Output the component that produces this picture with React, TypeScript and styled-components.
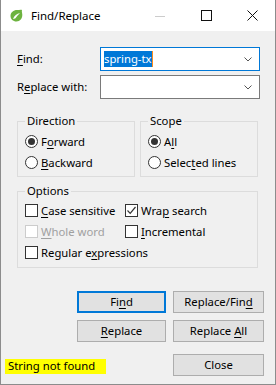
import React from 'react';
import styled, { createGlobalStyle, css } from 'styled-components';

const GlobalStyle = createGlobalStyle`
  html, body {
    margin: 0;
    padding: 0;
    background: #ffffff;
  }
  * {
    box-sizing: border-box;
  }
`;

const Window = styled.div`
  width: 276px;
  height: 385px;
  display: flex;
  flex-direction: column;
  background: #f0f0f0;
  border: 1px solid #8c8c8c;
  border-top: none;
  font-family: "Noto Sans", "Open Sans", sans-serif;
  font-size: 11.3px;
  color: #000;
  overflow: hidden;
`;

const TitleBar = styled.div`
  height: 31px;
  flex: none;
  background: #ffffff;
  display: flex;
  align-items: center;
  padding-left: 9px;
`;

const Title = styled.span`
  margin-left: 8px;
  font-size: 11.5px;
  color: #000;
  flex: 1;
  padding-bottom: 1px;
`;

const CaptionButton = styled.div`
  width: 46px;
  height: 31px;
  display: flex;
  align-items: center;
  justify-content: center;
`;

const Body = styled.div`
  flex: 1;
  display: flex;
  flex-direction: column;
  padding: 16px 11px 0 16px;
`;

const FieldRow = styled.div`
  display: flex;
  align-items: center;
  height: 24px;
  margin-right: 4px;
  & + & {
    margin-top: 4px;
  }
`;

const FieldLabel = styled.span`
  width: 83px;
  padding-bottom: 1px;
`;

const Combo = styled.div<{ focused?: boolean }>`
  flex: 1;
  height: 24px;
  background: #fff;
  border: 1px solid ${p => (p.focused ? '#0078d7' : '#7a7a7a')};
  display: flex;
  align-items: center;
  padding: 0 7px 0 3px;
`;

const Selected = styled.span`
  background: #0078d7;
  color: #fff;
  line-height: 15px;
  border-right: 1px solid #ff8c1a;
  padding-bottom: 1px;
`;

const ComboValue = styled.div`
  flex: 1;
  display: flex;
`;

const Groups = styled.div`
  display: flex;
  gap: 5px;
  margin-top: 14px;
  width: 241px;
`;

const Group = styled.fieldset<{ wide?: boolean }>`
  margin: 0;
  border: 1px solid #dcdcdc;
  padding: 2px 0 3px 7px;
  width: ${p => (p.wide ? '241px' : '118px')};
  display: flex;
  flex-direction: column;
  ${p =>
    p.wide &&
    css`
      margin-top: 6px;
      padding-top: 1px;
      padding-bottom: 4px;
    `}
`;

const Legend = styled.legend`
  padding: 0 2px;
  margin-left: 0;
  line-height: 16px;
`;

const OptionGrid = styled.div`
  display: grid;
  grid-template-columns: 100px 1fr;
  row-gap: 0;
`;

const Choice = styled.div<{ disabled?: boolean; span?: boolean }>`
  display: flex;
  align-items: center;
  height: 21px;
  gap: 3px;
  color: ${p => (p.disabled ? '#a0a0a0' : '#000')};
  white-space: nowrap;
  ${p =>
    p.span &&
    css`
      grid-column: 1 / span 2;
    `}
`;

const Radio = styled.span<{ checked?: boolean }>`
  width: 13px;
  height: 13px;
  border-radius: 50%;
  border: 1px solid #333;
  background: #fff;
  display: flex;
  align-items: center;
  justify-content: center;
  flex: none;
  &::after {
    content: '';
    width: 7px;
    height: 7px;
    border-radius: 50%;
    background: ${p => (p.checked ? '#333' : 'transparent')};
  }
`;

const Box = styled.span<{ disabled?: boolean }>`
  width: 13px;
  height: 13px;
  border: 1px solid ${p => (p.disabled ? '#cccccc' : '#333')};
  background: #fff;
  flex: none;
  display: flex;
  align-items: center;
  justify-content: center;
`;

const U = styled.span`
  text-decoration: underline;
  text-underline-offset: 2px;
`;

const Buttons = styled.div`
  display: grid;
  grid-template-columns: 89px 91px;
  column-gap: 7px;
  row-gap: 7px;
  justify-content: end;
  margin-top: 23px;
`;

const Button = styled.div<{ primary?: boolean }>`
  height: 22px;
  background: #e1e1e1;
  border: ${p => (p.primary ? '2px solid #0078d7' : '1px solid #adadad')};
  display: flex;
  align-items: center;
  justify-content: center;
  padding-bottom: 1px;
`;

const Footer = styled.div`
  display: flex;
  justify-content: space-between;
  align-items: flex-start;
  margin-top: 12px;
  margin-left: -12px;
`;

const Status = styled.span`
  background: #ffff00;
  margin-top: 5px;
  height: 15px;
  width: 101px;
  padding-left: 3px;
  line-height: 14px;
`;

const CloseButton = styled(Button)`
  width: 91px;
`;

const SpringIcon = () => (
  <svg width="13" height="13" viewBox="0 0 13 13">
    <path d="M12 1 C11 0.4 9 1 7 1 C3.5 1 0.5 3.5 0.5 7 C0.5 10 3 12.5 6.5 12.5 C10 12.5 12.5 9.5 12.3 5.5 C12.2 3.5 11.5 2.5 12 1 Z" fill="#6db33f" />
    <path d="M3 10 C4 6.5 7 5 10 4 C8 5.8 6.5 7.5 5.5 9.2 C4.8 9.8 3.8 10 3 10 Z" fill="#ffffff" />
  </svg>
);

const Chevron = () => (
  <svg width="8" height="5" viewBox="0 0 8 5">
    <path d="M0.5 0.5 L4 4 L7.5 0.5" fill="none" stroke="#555" strokeWidth="1" />
  </svg>
);

const Check = () => (
  <svg width="11" height="11" viewBox="0 0 11 11">
    <path d="M1.5 5.5 L4.2 8.3 L9.5 2" fill="none" stroke="#333" strokeWidth="1.2" />
  </svg>
);

export default function App() {
  return (
    <>
      <GlobalStyle />
      <Window>
        <TitleBar>
          <SpringIcon />
          <Title>Find/Replace</Title>
          <CaptionButton>
            <svg width="10" height="10" viewBox="0 0 10 10">
              <line x1="0" y1="5.5" x2="10" y2="5.5" stroke="#cccccc" strokeWidth="1" />
            </svg>
          </CaptionButton>
          <CaptionButton>
            <svg width="11" height="11" viewBox="0 0 11 11">
              <rect x="0.5" y="0.5" width="10" height="10" fill="none" stroke="#111" strokeWidth="1" />
            </svg>
          </CaptionButton>
          <CaptionButton>
            <svg width="11" height="11" viewBox="0 0 11 11">
              <path d="M0.5 0.5 L10.5 10.5 M10.5 0.5 L0.5 10.5" stroke="#111" strokeWidth="1" />
            </svg>
          </CaptionButton>
        </TitleBar>
        <Body>
          <FieldRow>
            <FieldLabel>
              <U>F</U>ind:
            </FieldLabel>
            <Combo focused>
              <ComboValue>
                <Selected>spring-tx</Selected>
              </ComboValue>
              <Chevron />
            </Combo>
          </FieldRow>
          <FieldRow>
            <FieldLabel>
              R<U>e</U>place with:
            </FieldLabel>
            <Combo>
              <ComboValue />
              <Chevron />
            </Combo>
          </FieldRow>

          <Groups>
            <Group>
              <Legend>Direction</Legend>
              <Choice>
                <Radio checked />
                <span>
                  F<U>o</U>rward
                </span>
              </Choice>
              <Choice>
                <Radio />
                <span>
                  <U>B</U>ackward
                </span>
              </Choice>
            </Group>
            <Group>
              <Legend>Scope</Legend>
              <Choice>
                <Radio checked />
                <span>
                  A<U>l</U>l
                </span>
              </Choice>
              <Choice>
                <Radio />
                <span>
                  Selec<U>t</U>ed lines
                </span>
              </Choice>
            </Group>
          </Groups>

          <Group wide>
            <Legend>Options</Legend>
            <OptionGrid>
              <Choice>
                <Box />
                <span>
                  <U>C</U>ase sensitive
                </span>
              </Choice>
              <Choice>
                <Box>
                  <Check />
                </Box>
                <span>
                  Wra<U>p</U> search
                </span>
              </Choice>
              <Choice disabled>
                <Box disabled />
                <span>
                  <U>W</U>hole word
                </span>
              </Choice>
              <Choice>
                <Box />
                <span>
                  <U>I</U>ncremental
                </span>
              </Choice>
              <Choice span>
                <Box />
                <span>
                  Regular e<U>x</U>pressions
                </span>
              </Choice>
            </OptionGrid>
          </Group>

          <Buttons>
            <Button primary>
              <span>
                Fi<U>n</U>d
              </span>
            </Button>
            <Button>
              <span>
                Replace/Fin<U>d</U>
              </span>
            </Button>
            <Button>
              <span>
                <U>R</U>eplace
              </span>
            </Button>
            <Button>
              <span>
                Replace <U>A</U>ll
              </span>
            </Button>
          </Buttons>

          <Footer>
            <Status>String not found</Status>
            <CloseButton>Close</CloseButton>
          </Footer>
        </Body>
      </Window>
    </>
  );
}
